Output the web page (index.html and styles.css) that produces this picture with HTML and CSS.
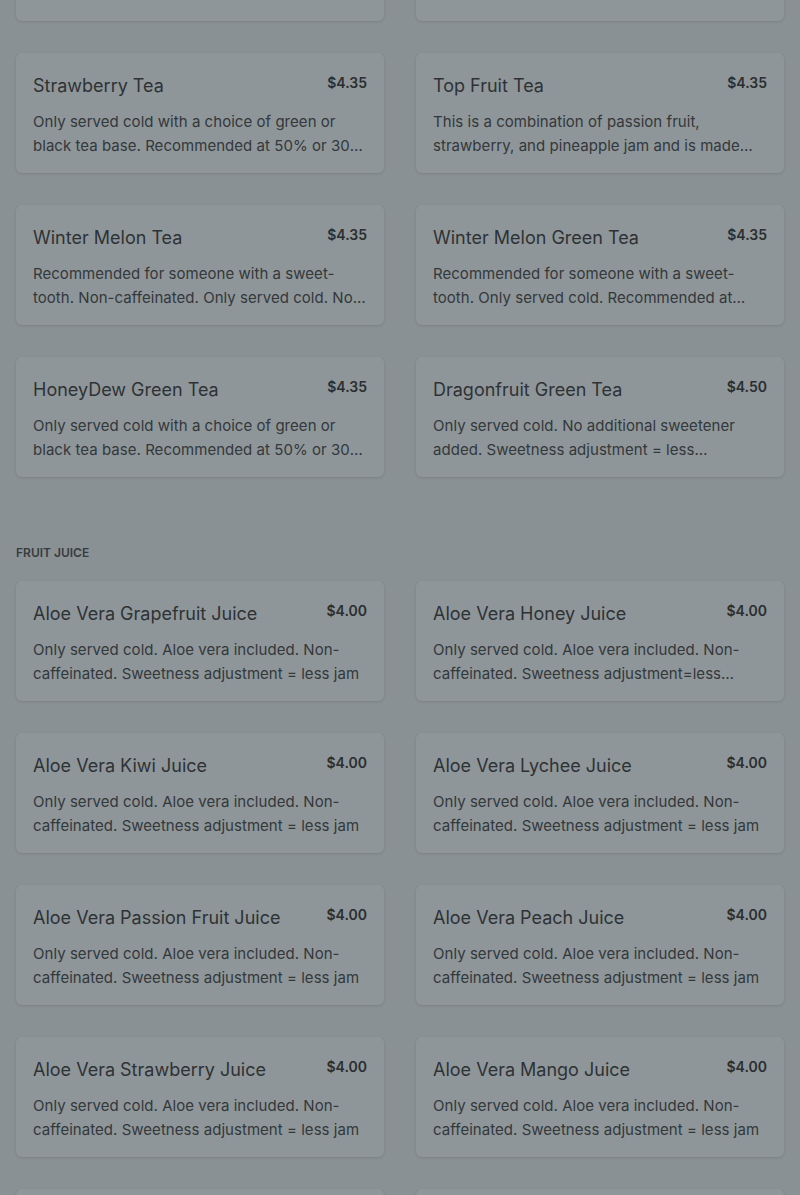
FILE: index.html
```html
<!DOCTYPE html>
<html lang="en">
<head>
<meta charset="utf-8">
<title>Menu</title>
<link rel="stylesheet" href="styles.css">
</head>
<body>
<main class="page">
  <section class="section">
    <div class="grid">
      <article class="card">
        <div class="card-head"><h3 class="card-title">Peach Green Tea</h3><span class="card-price">$4.35</span></div>
        <p class="card-desc">Only served cold with a choice of green or black tea base. Recommended at 50% or 30% sweetness.</p>
      </article>
      <article class="card">
        <div class="card-head"><h3 class="card-title">Passion Fruit Tea</h3><span class="card-price">$4.35</span></div>
        <p class="card-desc">Only served cold with a choice of green or black tea base. Recommended at 50% or 30% sweetness.</p>
      </article>
      <article class="card">
        <div class="card-head"><h3 class="card-title">Strawberry Tea</h3><span class="card-price">$4.35</span></div>
        <p class="card-desc">Only served cold with a choice of green or black tea base. Recommended at 50% or 30% sweetness.</p>
      </article>
      <article class="card">
        <div class="card-head"><h3 class="card-title">Top Fruit Tea</h3><span class="card-price">$4.35</span></div>
        <p class="card-desc">This is a combination of passion fruit, strawberry, and pineapple jam and is made with green tea.</p>
      </article>
      <article class="card">
        <div class="card-head"><h3 class="card-title">Winter Melon Tea</h3><span class="card-price">$4.35</span></div>
        <p class="card-desc">Recommended for someone with a sweet-tooth. Non-caffeinated. Only served cold. No sweetness adjustment.</p>
      </article>
      <article class="card">
        <div class="card-head"><h3 class="card-title">Winter Melon Green Tea</h3><span class="card-price">$4.35</span></div>
        <p class="card-desc">Recommended for someone with a sweet-tooth. Only served cold. Recommended at 50% sweetness.</p>
      </article>
      <article class="card">
        <div class="card-head"><h3 class="card-title">HoneyDew Green Tea</h3><span class="card-price">$4.35</span></div>
        <p class="card-desc">Only served cold with a choice of green or black tea base. Recommended at 50% or 30% sweetness.</p>
      </article>
      <article class="card">
        <div class="card-head"><h3 class="card-title">Dragonfruit Green Tea</h3><span class="card-price">$4.50</span></div>
        <p class="card-desc">Only served cold. No additional sweetener added. Sweetness adjustment = less dragonfruit jam.</p>
      </article>
    </div>
  </section>

  <section class="section">
    <h2 class="section-title">Fruit Juice</h2>
    <div class="grid">
      <article class="card">
        <div class="card-head"><h3 class="card-title">Aloe Vera Grapefruit Juice</h3><span class="card-price">$4.00</span></div>
        <p class="card-desc">Only served cold. Aloe vera included. Non-caffeinated. Sweetness adjustment = less jam</p>
      </article>
      <article class="card">
        <div class="card-head"><h3 class="card-title">Aloe Vera Honey Juice</h3><span class="card-price">$4.00</span></div>
        <p class="card-desc">Only served cold. Aloe vera included. Non-caffeinated. Sweetness adjustment=less honey</p>
      </article>
      <article class="card">
        <div class="card-head"><h3 class="card-title">Aloe Vera Kiwi Juice</h3><span class="card-price">$4.00</span></div>
        <p class="card-desc">Only served cold. Aloe vera included. Non-caffeinated. Sweetness adjustment = less jam</p>
      </article>
      <article class="card">
        <div class="card-head"><h3 class="card-title">Aloe Vera Lychee Juice</h3><span class="card-price">$4.00</span></div>
        <p class="card-desc">Only served cold. Aloe vera included. Non-caffeinated. Sweetness adjustment = less jam</p>
      </article>
      <article class="card">
        <div class="card-head"><h3 class="card-title">Aloe Vera Passion Fruit Juice</h3><span class="card-price">$4.00</span></div>
        <p class="card-desc">Only served cold. Aloe vera included. Non-caffeinated. Sweetness adjustment = less jam</p>
      </article>
      <article class="card">
        <div class="card-head"><h3 class="card-title">Aloe Vera Peach Juice</h3><span class="card-price">$4.00</span></div>
        <p class="card-desc">Only served cold. Aloe vera included. Non-caffeinated. Sweetness adjustment = less jam</p>
      </article>
      <article class="card">
        <div class="card-head"><h3 class="card-title">Aloe Vera Strawberry Juice</h3><span class="card-price">$4.00</span></div>
        <p class="card-desc">Only served cold. Aloe vera included. Non-caffeinated. Sweetness adjustment = less jam</p>
      </article>
      <article class="card">
        <div class="card-head"><h3 class="card-title">Aloe Vera Mango Juice</h3><span class="card-price">$4.00</span></div>
        <p class="card-desc">Only served cold. Aloe vera included. Non-caffeinated. Sweetness adjustment = less jam</p>
      </article>
      <article class="card">
        <div class="card-head"><h3 class="card-title">Aloe Vera Pineapple Juice</h3><span class="card-price">$4.00</span></div>
        <p class="card-desc">Only served cold. Aloe vera included. Non-caffeinated. Sweetness adjustment = less jam</p>
      </article>
      <article class="card">
        <div class="card-head"><h3 class="card-title">Aloe Vera Lemon Juice</h3><span class="card-price">$4.00</span></div>
        <p class="card-desc">Only served cold. Aloe vera included. Non-caffeinated. Sweetness adjustment = less jam</p>
      </article>
    </div>
  </section>
</main>
</body>
</html>
```
FILE: styles.css
```css
html, body {
  margin: 0;
  padding: 0;
  background: #8a9194;
  height: 1195px;
  overflow: hidden;
}

body {
  font-family: Inter, "Noto Sans", sans-serif;
  color: #2c3033;
}

.page {
  padding: 0 16px;
  margin-top: -99px;
}

.section + .section {
  margin-top: 64px;
}

.section-title {
  margin: 0 0 16px;
  font-size: 12px;
  line-height: 24px;
  font-weight: 600;
  text-transform: uppercase;
  color: #363b3e;
}

.grid {
  display: grid;
  grid-template-columns: 1fr 1fr;
  column-gap: 32px;
  row-gap: 32px;
}

.card {
  background: #8f9699;
  border-radius: 6px;
  box-shadow: 0 1px 3px rgba(0, 0, 0, 0.12);
  padding: 21px 17px 14px;
  height: 120px;
  box-sizing: border-box;
}

.card-head {
  display: flex;
  justify-content: space-between;
  align-items: flex-start;
  gap: 12px;
}

.card-title {
  margin: 0;
  font-size: 18px;
  font-weight: 400;
  line-height: 24px;
  color: #2e3235;
}

.card-price {
  font-size: 14px;
  font-weight: 600;
  line-height: 18px;
  color: #2a2e31;
}

.card-desc {
  margin: 12px 0 0;
  font-size: 15px;
  letter-spacing: 0.04px;
  line-height: 24px;
  color: #33383b;
  display: -webkit-box;
  -webkit-line-clamp: 2;
  -webkit-box-orient: vertical;
  overflow: hidden;
}
```
